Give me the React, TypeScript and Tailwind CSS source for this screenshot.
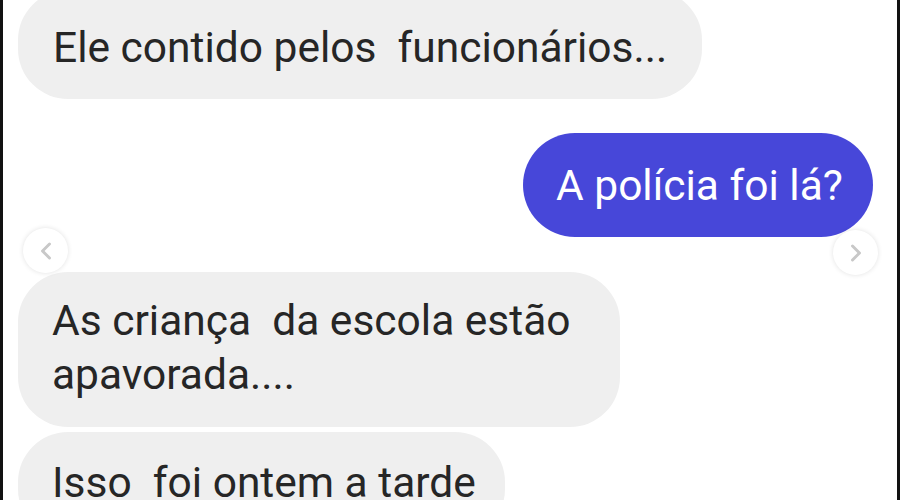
import { ChevronLeft, ChevronRight } from 'lucide-react';

const font = { fontFamily: 'Roboto, "Noto Sans", sans-serif' };

export default function App() {
  return (
    <div
      className="relative h-[500px] w-[900px] overflow-hidden bg-white border-l-[3px] border-r-[3px] border-[#111]"
      style={font}
    >
      <div className="flex flex-col pl-[15px] pr-[24px] text-[42.5px] leading-[52px]">
        <div className="-mt-[10px] self-start w-[684px] rounded-[50px] bg-[#efefef] pl-[35px] pt-[32px] pb-[25px] text-[#262626]">
          Ele contido pelos&nbsp; funcionários...
        </div>

        <div className="mt-[34px] self-end w-[350px] rounded-[52px] bg-[#4747d9] pl-[33px] pt-[27px] pb-[25px] text-white">
          A polícia foi lá?
        </div>

        <div className="mt-[35px] self-start w-[602px] rounded-[50px] bg-[#efefef] pl-[34px] pt-[22px] pb-[25px] leading-[54px] text-[#262626]">
          As criança&nbsp; da escola estão
          <br />
          apavorada....
        </div>

        <div className="mt-[5px] self-start w-[487px] rounded-[50px] bg-[#efefef] pl-[34px] pt-[25px] pb-[30px] text-[#262626]">
          Isso&nbsp; foi ontem a tarde
        </div>
      </div>

      <div className="absolute left-[20px] top-[228px] flex h-[45px] w-[45px] items-center justify-center rounded-full bg-white shadow-[0_0_5px_rgba(0,0,0,0.12)]">
        <ChevronLeft className="h-[28px] w-[28px] text-[#c8c8c8]" strokeWidth={2.5} />
      </div>
      <div className="absolute left-[830px] top-[230px] flex h-[45px] w-[45px] items-center justify-center rounded-full bg-white shadow-[0_0_5px_rgba(0,0,0,0.12)]">
        <ChevronRight className="h-[28px] w-[28px] text-[#c8c8c8]" strokeWidth={2.5} />
      </div>
    </div>
  );
}
